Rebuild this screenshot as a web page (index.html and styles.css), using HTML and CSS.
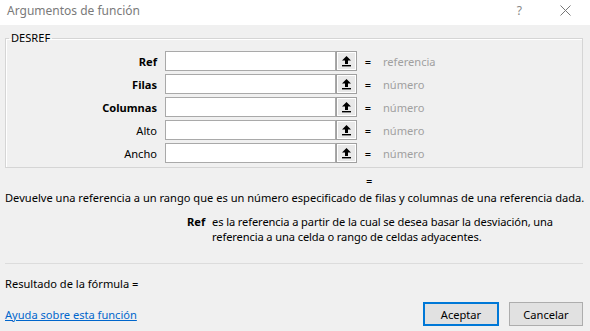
FILE: index.html
```html
<!DOCTYPE html>
<html lang="es">
<head>
  <meta charset="UTF-8">
  <meta name="viewport" content="width=device-width, initial-scale=1.0">
  <title>Argumentos de función</title>
  <link rel="stylesheet" href="styles.css">
</head>
<body>
  <div class="titlebar">
    <span class="title">Argumentos de función</span>
    <span class="help">?</span>
    <svg class="close" width="11" height="11" viewBox="0 0 11 11">
      <path d="M0.5 0.5 L10.5 10.5 M10.5 0.5 L0.5 10.5" stroke="#777" stroke-width="1" fill="none"/>
    </svg>
  </div>

  <div class="content">
    <fieldset class="args">
      <legend>DESREF</legend>
      <div class="arg-grid">
        <label class="name bold">Ref</label>
        <input type="text" class="ref-input">
        <button type="button" class="pick"><svg width="11" height="12" viewBox="0 0 11 12"><path d="M5.5 1 L10 5.5 L7 5.5 L7 9 L4 9 L4 5.5 L1 5.5 Z" fill="#000"/><rect x="1" y="10" width="9" height="1.4" fill="#000"/></svg></button>
        <span class="eq">=</span>
        <span class="val">referencia</span>

        <label class="name bold">Filas</label>
        <input type="text" class="ref-input">
        <button type="button" class="pick"><svg width="11" height="12" viewBox="0 0 11 12"><path d="M5.5 1 L10 5.5 L7 5.5 L7 9 L4 9 L4 5.5 L1 5.5 Z" fill="#000"/><rect x="1" y="10" width="9" height="1.4" fill="#000"/></svg></button>
        <span class="eq">=</span>
        <span class="val">número</span>

        <label class="name bold">Columnas</label>
        <input type="text" class="ref-input">
        <button type="button" class="pick"><svg width="11" height="12" viewBox="0 0 11 12"><path d="M5.5 1 L10 5.5 L7 5.5 L7 9 L4 9 L4 5.5 L1 5.5 Z" fill="#000"/><rect x="1" y="10" width="9" height="1.4" fill="#000"/></svg></button>
        <span class="eq">=</span>
        <span class="val">número</span>

        <label class="name">Alto</label>
        <input type="text" class="ref-input">
        <button type="button" class="pick"><svg width="11" height="12" viewBox="0 0 11 12"><path d="M5.5 1 L10 5.5 L7 5.5 L7 9 L4 9 L4 5.5 L1 5.5 Z" fill="#000"/><rect x="1" y="10" width="9" height="1.4" fill="#000"/></svg></button>
        <span class="eq">=</span>
        <span class="val">número</span>

        <label class="name">Ancho</label>
        <input type="text" class="ref-input">
        <button type="button" class="pick"><svg width="11" height="12" viewBox="0 0 11 12"><path d="M5.5 1 L10 5.5 L7 5.5 L7 9 L4 9 L4 5.5 L1 5.5 Z" fill="#000"/><rect x="1" y="10" width="9" height="1.4" fill="#000"/></svg></button>
        <span class="eq">=</span>
        <span class="val">número</span>
      </div>
    </fieldset>

    <div class="result-eq">=</div>
    <p class="desc">Devuelve una referencia a un rango que es un número especificado de filas y columnas de una referencia dada.</p>

    <div class="arg-help">
      <span class="arg-name">Ref</span>
      <span class="arg-text">es la referencia a partir de la cual se desea basar la desviación, una referencia a una celda o rango de celdas adyacentes.</span>
    </div>

    <div class="footer">
      <div class="result">Resultado de la fórmula =</div>
      <div class="bottom-row">
        <a href="#" class="help-link">Ayuda sobre esta función</a>
        <div class="buttons">
          <button type="button" class="btn default">Aceptar</button>
          <button type="button" class="btn">Cancelar</button>
        </div>
      </div>
    </div>
  </div>
</body>
</html>
```
FILE: styles.css
```css
body {
  margin: 0;
  width: 590px;
  height: 331px;
  background-color: #f0f0f0;
  font-family: "Noto Sans", "Open Sans", sans-serif;
  font-size: 11.1px;
  color: #000;
  overflow: hidden;
}

.titlebar {
  box-sizing: border-box;
  height: 25px;
  background-color: #fff;
  display: flex;
  align-items: center;
  padding: 0 0 4px 7px;
}
.title {
  color: #7a7a7a;
  font-size: 12px;
  flex: 1;
}
.help {
  color: #888;
  font-size: 12px;
  margin-right: 38px;
}
.close {
  margin-right: 19px;
}

.content {
  padding: 0 7px 0 5px;
}

.args {
  margin: 6px 0 0;
  padding: 6px 0 4px;
  border: 1px solid #d5d5d5;
  box-shadow: inset 1px 1px 0 #fff;
}
.args legend {
  margin-left: 3px;
  padding: 0 2px;
  line-height: 14px;
}

.arg-grid {
  display: grid;
  grid-template-columns: 151px 179px 21px 22px 1fr;
  grid-auto-rows: 20px;
  row-gap: 3px;
  align-items: center;
}
.name {
  text-align: right;
}
.bold {
  font-weight: bold;
}
.ref-input {
  box-sizing: border-box;
  height: 20px;
  width: 171px;
  margin: 0 0 0 8px;
  border: 1px solid #a9a9a9;
  background: #fff;
}
.pick {
  box-sizing: border-box;
  width: 21px;
  height: 20px;
  margin: 0;
  padding: 0;
  border: 1px solid #a0a0a0;
  background: #e9e9e9;
  box-shadow: inset 1px 1px 0 #fff, inset -1px -1px 0 #fff;
  display: flex;
  align-items: center;
  justify-content: center;
}
.eq {
  text-align: center;
}
.val {
  color: #a0a0a0;
  padding-left: 4px;
}

.result-eq {
  margin: 6px 0 0 361px;
  line-height: 14px;
}
.desc {
  margin: 2px 0 0;
  line-height: 16px;
  white-space: nowrap;
}

.arg-help {
  display: flex;
  margin: 8px 0 0 182px;
  line-height: 15px;
}
.arg-name {
  font-weight: bold;
  width: 25px;
  flex: none;
}
.arg-text {
  width: 371px;
  letter-spacing: -0.1px;
}

.footer {
  margin-top: 19px;
  border-top: 1px solid #dcdcdc;
  padding-top: 13px;
}
.result {
  line-height: 14px;
}
.bottom-row {
  display: flex;
  align-items: center;
  justify-content: space-between;
  margin-top: 11px;
}
.help-link {
  color: #0066cc;
  text-decoration: underline;
}
.buttons {
  display: flex;
  gap: 10px;
}
.btn {
  box-sizing: border-box;
  width: 74px;
  height: 24px;
  border: 1px solid #adadad;
  background: #e1e1e1;
  font-family: inherit;
  font-size: 11.1px;
  color: #000;
  padding: 0;
}
.btn.default {
  width: 76px;
  border: 2px solid #0078d7;
}
```
